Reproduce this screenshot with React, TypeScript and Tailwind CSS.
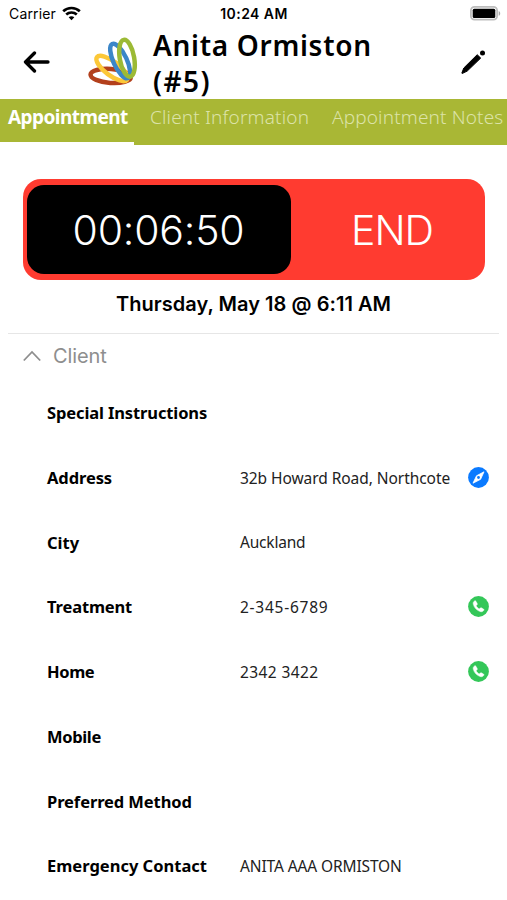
import React from "react";

type Action = "map" | "call";
type Field = { label: string; labelClass: string; value?: string; valueClass?: string; action?: Action };

const fields: Field[] = [
  { label: "Special Instructions", labelClass: "tracking-[-0.12px]" },
  { label: "Address", labelClass: "tracking-[-0.1px]", value: "32b Howard Road, Northcote", valueClass: "tracking-[-0.06px]", action: "map" },
  { label: "City", labelClass: "tracking-[0px]", value: "Auckland", valueClass: "tracking-[-0.2px]" },
  { label: "Treatment", labelClass: "tracking-[-0.15px]", value: "2-345-6789", valueClass: "tracking-[0.75px]", action: "call" },
  { label: "Home", labelClass: "tracking-[-0.4px]", value: "2342 3422", valueClass: "tracking-[0.4px]", action: "call" },
  { label: "Mobile", labelClass: "tracking-[-0.35px]" },
  { label: "Preferred Method", labelClass: "tracking-[-0.1px]" },
  { label: "Emergency Contact", labelClass: "tracking-[0px]", value: "ANITA AAA ORMISTON", valueClass: "tracking-[-0.12px]" },
];

function WifiIcon() {
  return (
    <svg className="mb-[1px] ml-[6px] h-[15px] w-[19px]" viewBox="0 0 19 15" fill="none" stroke="#000" strokeWidth="2.7">
      <path d="M1.2 5.2C5.8 .9 13.2 .9 17.8 5.2" />
      <path d="M4.2 8.5c3-2.7 7.6-2.7 10.6 0" />
      <path d="M9.5 14.2 6.7 11.3c1.6-1.5 4-1.5 5.6 0Z" fill="#000" stroke="none" />
    </svg>
  );
}

function BatteryIcon() {
  return (
    <svg className="h-[15px] w-[31px]" viewBox="0 0 31 15">
      <rect x=".9" y=".9" width="26.2" height="12.8" rx="3.6" fill="#fff" stroke="#bdbdbd" strokeWidth="1.8" />
      <rect x="2.700" y="2.700" width="22.600" height="9.200" rx="1.500" fill="#000" />
      <path d="M28.700 5v4.800c2-.8 2-4 0-4.800Z" fill="#a8a8a8" />
    </svg>
  );
}

function Logo() {
  return (
    <svg className="h-[52px] w-[52px]" viewBox="0 0 52 52" fill="none" strokeWidth="4.5">
      <ellipse cx="23.7" cy="38.9" rx="20.2" ry="7" stroke="#b3401c" transform="rotate(4 23.7 38.9)" />
      <ellipse cx="25" cy="31.500" rx="18.800" ry="7" stroke="#fcc838" transform="rotate(37 25 31.5)" />
      <ellipse cx="33.200" cy="24" rx="18.800" ry="6.700" stroke="#3b86c8" transform="rotate(65 33.2 24)" />
      <ellipse cx="40" cy="21.300" rx="18.700" ry="7.200" stroke="#9cba35" transform="rotate(80 40 21.3)" />
    </svg>
  );
}

function ActionIcon({ kind }: { kind: Action }) {
  return kind === "map" ? (
    <svg className="mb-[2px] h-[21px] w-[21px]" viewBox="0 0 21 21">
      <circle cx="10.5" cy="10.5" r="10.4" fill="#0a7aff" />
      <path d="M16 4.8 12.6 12.3 5 16.2 8.5 8.8Z" fill="#fff" stroke="#fff" strokeWidth=".8" strokeLinejoin="round" />
      <circle cx="10.5" cy="10.5" r="1.4" fill="#0a7aff" />
    </svg>
  ) : (
    <svg className="mb-[2px] h-[21px] w-[21px]" viewBox="0 0 21 21">
      <circle cx="10.5" cy="10.5" r="10.4" fill="#34c759" />
      <path d="M6.6 4.9c-1.3.8-1.7 2-1.2 3.7 1 3.4 3.4 5.8 6.7 6.9 1.7.5 2.9.1 3.7-1.2.3-.5.2-.9-.3-1.2l-1.9-1.2c-.5-.3-.9-.2-1.3.2l-.5.5c-.3.3-.6.3-1 .1-1-.6-1.8-1.4-2.4-2.4-.2-.4-.2-.7.1-1l.5-.5c.4-.4.5-.8.2-1.3L7.9 5.2c-.3-.5-.8-.6-1.3-.3Z" fill="#fff" stroke="#fff" strokeWidth=".5" />
    </svg>
  );
}

export default function App() {
  return (
    <div className="flex h-[900px] w-[507px] flex-col overflow-hidden bg-white font-['Noto_Sans',sans-serif] text-black">
      <div className="grid h-[27px] shrink-0 grid-cols-3 items-center pl-[9px] pr-[6px] font-['Inter',sans-serif] text-[14px]">
        <div className="flex items-center">
          <span className="tracking-[0.15px]">Carrier</span>
          <WifiIcon />
        </div>
        <span className="mr-[2px] text-center font-semibold tracking-[0.45px]">10:24 AM</span>
        <div className="flex justify-end">
          <BatteryIcon />
        </div>
      </div>

      <header className="flex h-[72px] shrink-0 items-center pl-[23px] pr-[21px]">
        <svg className="mb-[2px] h-[22px] w-[27px] shrink-0" viewBox="0 0 27 22" fill="none" stroke="#000" strokeWidth="3.3" strokeLinecap="round" strokeLinejoin="round">
          <path d="M11.5 2 2.5 11l9 9M2.5 11H25" />
        </svg>
        <div className="ml-[37px] shrink-0">
          <Logo />
        </div>
        <h1 className="ml-[14px] flex-1 whitespace-nowrap text-[28px] font-semibold leading-[36px]">
          <span className="block tracking-[0.7px]">Anita Ormiston</span>
          <span className="block tracking-[1.4px]">(#5)</span>
        </h1>
        <svg className="mb-[3px] h-[26px] w-[26px] shrink-0" viewBox="0 0 26 26">
          <path d="M17.2 5.700 20.700 9.100 7.200 22.100 2.200 24.500 1.800 24.100 3.800 19Z" fill="#000" stroke="#000" strokeWidth="1" strokeLinejoin="round" />
          <circle cx="22.500" cy="4" r="2.500" fill="#000" />
        </svg>
      </header>

      <nav className="flex h-[46px] shrink-0 whitespace-nowrap bg-[#a9b735] text-[19px] leading-[37px] text-[#dce3a8]">
        <div className="w-[134px] border-b-[3px] border-white pl-[8px] font-bold text-white">
          <span className="tracking-[-0.55px]">Appointment</span>
        </div>
        <div className="w-[182px] pl-[16px] font-light">
          <span className="tracking-[0.16px]">Client Information</span>
        </div>
        <div className="flex-1 pl-[16px] font-light">
          <span className="tracking-[0.15px]">Appointment Notes</span>
        </div>
      </nav>

      <main className="flex flex-col font-['Inter',sans-serif]">
        <div className="ml-[23px] mt-[34px] flex h-[101px] w-[462px] rounded-[18px] bg-[#ff3b30] py-[6px] pl-[4px] text-[41px] font-light text-white">
          <div className="flex w-[264px] items-center justify-center rounded-[17px] bg-black pt-[2px]">
            <span className="mr-[1px] tracking-[-0.2px]">00:06:50</span>
          </div>
          <div className="flex flex-1 items-center justify-center pl-[8px] pt-[2px]">
            <span className="tracking-[-1px]">END</span>
          </div>
        </div>
        <div className="mt-[9px] text-center text-[20px] font-semibold leading-[30px]">
          <span className="tracking-[0.04px]">Thursday, May 18 @ 6:11 AM</span>
        </div>
        <div className="mx-[8px] mt-[14px] h-px bg-[#e6e6e6]" />
        <div className="flex h-[47px] items-center pb-[3px] pl-[23px] text-[20px] text-[#8e8e8e]">
          <svg className="h-[12px] w-[18px]" viewBox="0 0 18 12" fill="none" stroke="#8e8e8e" strokeWidth="1.8">
            <path d="M.8 10.5 9 2l8.2 8.5" />
          </svg>
          <span className="ml-[12px] tracking-[-0.1px]">Client</span>
        </div>
      </main>

      <section className="flex flex-col">
        {fields.map((field) => (
          <div key={field.label} className="flex h-[64.75px] shrink-0 items-center whitespace-nowrap pl-[47px] pr-[18px]">
            <div className="w-[193px] text-[16.5px] font-bold">
              <span className={field.labelClass}>{field.label}</span>
            </div>
            <div className="flex-1 text-[15.5px] text-[#222]">
              <span className={field.valueClass}>{field.value}</span>
            </div>
            {field.action && <ActionIcon kind={field.action} />}
          </div>
        ))}
      </section>
    </div>
  );
}
